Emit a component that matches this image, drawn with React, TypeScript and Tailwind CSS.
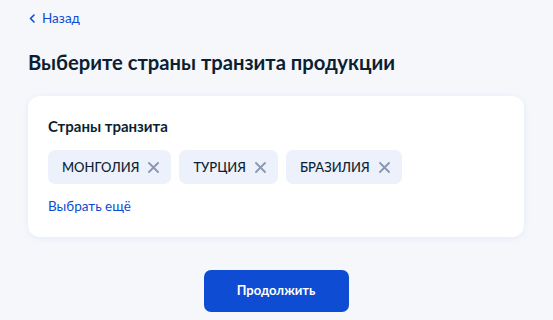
import React from "react";

const countries = ["МОНГОЛИЯ", "ТУРЦИЯ", "БРАЗИЛИЯ"];

function CloseIcon() {
  return (
    <svg width="11" height="11" viewBox="0 0 11 11" fill="none" className="shrink-0">
      <path d="M1 1L10 10M10 1L1 10" stroke="#8a97b0" strokeWidth="1.8" strokeLinecap="round" />
    </svg>
  );
}

export default function App() {
  return (
    <div
      className="min-h-[320px] w-full bg-[#f5f7fb] pl-[28px] pr-[29px] pt-[8px] text-[#0b1f33]"
      style={{ fontFamily: "Lato, 'Noto Sans', sans-serif" }}
    >
      {/* Back link */}
      <a href="#" className="flex h-[20px] items-center gap-[7px] text-[13.5px] leading-[20px] text-[#0d4cd3]">
        <svg width="6" height="9" viewBox="0 0 6 9" fill="none" className="ml-[1px]">
          <path d="M5 1L1.5 4.5L5 8" stroke="#0d4cd3" strokeWidth="1.6" strokeLinecap="round" strokeLinejoin="round" />
        </svg>
        Назад
      </a>

      {/* Heading */}
      <h1 className="mt-[20px] text-[20.2px] font-bold leading-[28px]">Выберите страны транзита продукции</h1>

      {/* Card */}
      <div className="mt-[20px] rounded-[12px] bg-white px-[20px] pb-[21px] pt-[20px] shadow-[0_1px_6px_rgba(102,150,221,0.12)]">
        <div className="text-[15px] font-bold leading-[20px]">Страны транзита</div>
        <div className="mt-[14px] flex gap-[8px]">
          {countries.map((c) => (
            <div
              key={c}
              className="flex h-[34px] items-center gap-[9px] rounded-[7px] bg-[#ecf1fb] pl-[14px] pr-[12px] text-[13px] font-medium leading-[20px]"
            >
              <span>{c}</span>
              <CloseIcon />
            </div>
          ))}
        </div>
        <a href="#" className="mt-[12px] block text-[13.5px] leading-[20px] text-[#0d4cd3]">
          Выбрать ещё
        </a>
      </div>

      {/* Continue */}
      <div className="mt-[33px] flex justify-center">
        <button className="h-[42px] w-[145px] rounded-[7px] bg-[#0d4cd3] text-[13px] font-bold text-white">
          Продолжить
        </button>
      </div>
    </div>
  );
}
